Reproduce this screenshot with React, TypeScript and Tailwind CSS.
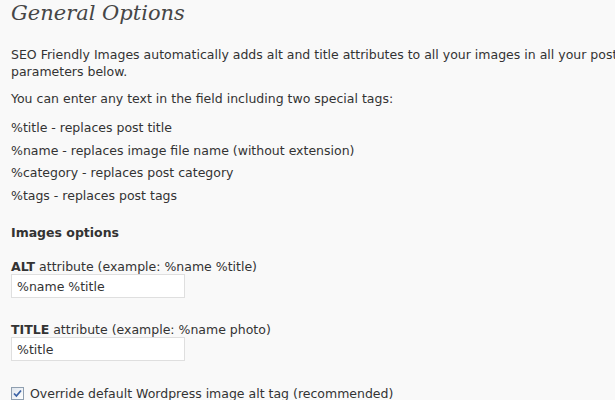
import React from "react";

const tags = [
  "%title - replaces post title",
  "%name - replaces image file name (without extension)",
  "%category - replaces post category",
  "%tags - replaces post tags",
];

function Field({ label, hint, value }: { label: string; hint: string; value: string }) {
  return (
    <div>
      <div className="leading-[15px]">
        <b>{label}</b> attribute (example: {hint})
      </div>
      <input
        readOnly
        value={value}
        className="block h-[24px] w-[174px] border border-[#dfdfdf] bg-white px-[5px] text-[12.5px] text-[#333] outline-none"
      />
    </div>
  );
}

export default function App() {
  return (
    <div className="h-[400px] w-[615px] overflow-hidden bg-[#f9f9f9] px-[11px] font-['DejaVu_Sans',sans-serif] text-[12.5px] text-[#333]">
      <h2 className="pt-0 font-['DejaVu_Serif',serif] text-[21px] italic leading-[27px] text-[#464646]">
        General Options
      </h2>

      <p className="mt-[19px] leading-[17px]">
        <span className="block whitespace-nowrap">
          SEO Friendly Images automatically adds alt and title attributes to all your images in all your posts
        </span>
        parameters below.
      </p>

      <p className="mt-[10px] leading-[17px]">You can enter any text in the field including two special tags:</p>

      <ul className="mt-[10px]">
        {tags.map((t) => (
          <li key={t} className="leading-[22.5px]">
            {t}
          </li>
        ))}
      </ul>

      <h3 className="mt-[17px] font-bold leading-[17px]">Images options</h3>

      <div className="mt-[18px]">
        <Field label="ALT" hint="%name %title" value="%name %title" />
      </div>
      <div className="mt-[24px]">
        <Field label="TITLE" hint="%name photo" value="%title" />
      </div>

      <label className="mt-[24px] flex items-center gap-[6px] leading-[17px]">
        <span className="flex h-[13px] w-[13px] items-center justify-center border border-[#8f9fb0] bg-gradient-to-br from-[#dfe6ee] to-white">
          <svg width="9" height="9" viewBox="0 0 9 9">
            <path d="M1 4.5 L3.4 7 L8 1.5" fill="none" stroke="#3c63a6" strokeWidth="1.8" />
          </svg>
        </span>
        Override default Wordpress image alt tag (recommended)
      </label>
    </div>
  );
}
